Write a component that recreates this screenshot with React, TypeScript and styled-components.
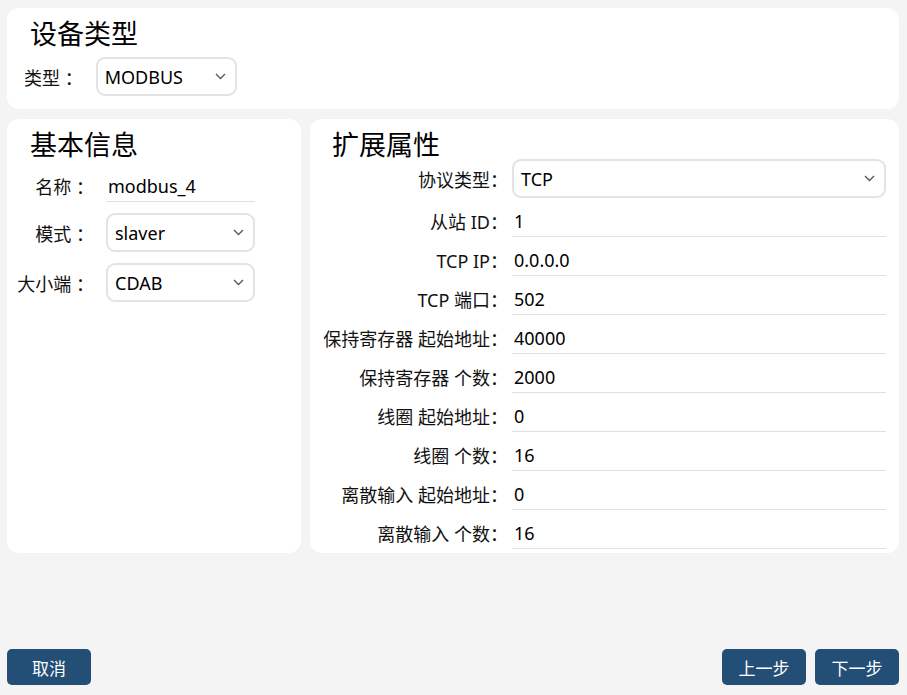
import { Fragment } from 'react'
import styled, { createGlobalStyle } from 'styled-components'

const GlobalStyle = createGlobalStyle`
  html, body {
    margin: 0;
    padding: 0;
    background: #f4f4f4;
  }
  body {
    font-family: 'Noto Sans', 'Noto Sans CJK SC', sans-serif;
    color: #111;
  }
  * {
    box-sizing: border-box;
  }
`

const Page = styled.div`
  height: 100vh;
  display: flex;
  flex-direction: column;
  padding: 8px 8px 10px 7px;
`

const Card = styled.section`
  background: #ffffff;
  border-radius: 12px;
`

const TopCard = styled(Card)`
  height: 101px;
  padding: 12px 16px 0 17px;
  display: flex;
  flex-direction: column;
  gap: 9px;
`

const Title = styled.h2<{ $indent: number; $after?: number }>`
  margin: 0 0 ${p => p.$after ?? 0}px;
  padding-left: ${p => p.$indent}px;
  font-size: 27px;
  font-weight: 400;
  line-height: 28px;
  height: 28px;
  color: #000;
`

const Panels = styled.div`
  margin-top: 10px;
  display: flex;
  gap: 9px;
`

const LeftCard = styled(Card)`
  width: 294px;
  height: 434px;
  padding: 12px 46px 0 8px;
`

const RightCard = styled(Card)`
  flex: 1;
  height: 434px;
  padding: 12px 13px 0 10px;
`

const TopRow = styled.div`
  display: flex;
  align-items: center;
  gap: 13px;
`

const Label = styled.span`
  font-size: 18px;
  white-space: pre;
  color: #111;
`

const Form = styled.div<{ $label: number; $gap: number; $rowGap: number }>`
  display: grid;
  grid-template-columns: ${p => p.$label}px 1fr;
  column-gap: ${p => p.$gap}px;
  row-gap: ${p => p.$rowGap}px;
  align-items: center;
`

const FieldLabel = styled(Label)`
  text-align: right;
`

const SelectBox = styled.div<{ $width?: number }>`
  width: ${p => (p.$width ? `${p.$width}px` : '100%')};
  height: 39px;
  border: 2px solid #e3e3e3;
  border-radius: 9px;
  display: flex;
  align-items: center;
  justify-content: space-between;
  padding: 0 9px 0 7px;
  font-size: 18px;
  color: #000;
  background: #fff;
`

const TextValue = styled.div`
  height: 32px;
  border-bottom: 1px solid #e0e0e0;
  display: flex;
  align-items: center;
  padding: 0 2px;
  font-size: 18px;
  color: #000;
`

const Footer = styled.footer`
  margin-top: auto;
  display: flex;
  align-items: center;
  gap: 9px;
`

const Spacer = styled.div`
  flex: 1;
`

const Button = styled.button`
  width: 84px;
  height: 36px;
  border: none;
  border-radius: 5px;
  background: #234e75;
  color: #fff;
  font-family: 'Noto Sans CJK SC', sans-serif;
  font-size: 17px;
  cursor: pointer;
`

function Chevron() {
  return (
    <svg width="11" height="7" viewBox="0 0 11 7">
      <polyline points="1,1 5.5,5.5 10,1" fill="none" stroke="#555" strokeWidth="1.3" />
    </svg>
  )
}

function Select({ value, width }: { value: string; width?: number }) {
  return (
    <SelectBox $width={width}>
      <span>{value}</span>
      <Chevron />
    </SelectBox>
  )
}

const extFields: [string, string][] = [
  ['从站 ID：', '1'],
  ['TCP IP：', '0.0.0.0'],
  ['TCP 端口：', '502'],
  ['保持寄存器 起始地址：', '40000'],
  ['保持寄存器 个数：', '2000'],
  ['线圈 起始地址：', '0'],
  ['线圈 个数：', '16'],
  ['离散输入 起始地址：', '0'],
  ['离散输入 个数：', '16'],
]

export default function App() {
  return (
    <>
      <GlobalStyle />
      <Page>
        <TopCard>
          <Title $indent={6}>设备类型</Title>
          <TopRow>
            <Label>类型 ：</Label>
            <Select value="MODBUS" width={141} />
          </TopRow>
        </TopCard>

        <Panels>
          <LeftCard>
            <Title $indent={15} $after={11}>基本信息</Title>
            <Form $label={79} $gap={12} $rowGap={11}>
              <FieldLabel>名称 ：</FieldLabel>
              <TextValue>modbus_4</TextValue>
              <FieldLabel>模式 ：</FieldLabel>
              <Select value="slaver" />
              <FieldLabel>大小端 ：</FieldLabel>
              <Select value="CDAB" />
            </Form>
          </LeftCard>

          <RightCard>
            <Title $indent={12}>扩展属性</Title>
            <Form $label={188} $gap={4} $rowGap={7}>
              <FieldLabel>协议类型：</FieldLabel>
              <Select value="TCP" />
              {extFields.map(([label, value]) => (
                <Fragment key={label}>
                  <FieldLabel>{label}</FieldLabel>
                  <TextValue>{value}</TextValue>
                </Fragment>
              ))}
            </Form>
          </RightCard>
        </Panels>

        <Footer>
          <Button>取消</Button>
          <Spacer />
          <Button>上一步</Button>
          <Button>下一步</Button>
        </Footer>
      </Page>
    </>
  )
}
